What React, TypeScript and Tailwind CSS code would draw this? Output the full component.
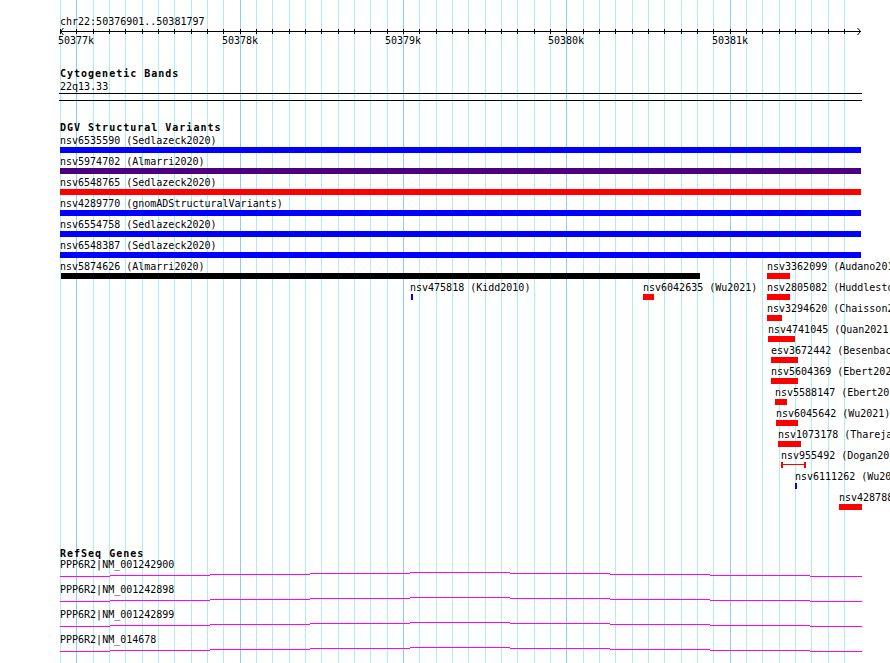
import React from "react";

const gridXs = Array.from({ length: 49 }, (_, k) => Math.round(60 + k * 16.3333));

type Feat = {
  row: number;
  x0: number;
  x1: number;
  color: string;
  label: string;
  lx?: number;
  ibeam?: boolean;
};

const feats: Feat[] = [
  { row: 0, x0: 60, x1: 861, color: "#0000ff", label: "nsv6535590 (Sedlazeck2020)" },
  { row: 1, x0: 60, x1: 861, color: "#4b0082", label: "nsv5974702 (Almarri2020)" },
  { row: 2, x0: 60, x1: 861, color: "#ff0000", label: "nsv6548765 (Sedlazeck2020)" },
  { row: 3, x0: 60, x1: 861, color: "#0000ff", label: "nsv4289770 (gnomADStructuralVariants)" },
  { row: 4, x0: 60, x1: 861, color: "#0000ff", label: "nsv6554758 (Sedlazeck2020)" },
  { row: 5, x0: 60, x1: 861, color: "#0000ff", label: "nsv6548387 (Sedlazeck2020)" },
  { row: 6, x0: 61, x1: 700, color: "#000000", label: "nsv5874626 (Almarri2020)", lx: 60 },
  { row: 6, x0: 767, x1: 790, color: "#ff0000", label: "nsv3362099 (Audano2019)" },
  { row: 7, x0: 411, x1: 413, color: "#0000ff", label: "nsv475818 (Kidd2010)", lx: 410 },
  { row: 7, x0: 643, x1: 654, color: "#ff0000", label: "nsv6042635 (Wu2021)" },
  { row: 7, x0: 767, x1: 790, color: "#ff0000", label: "nsv2805082 (Huddleston2017)" },
  { row: 8, x0: 767, x1: 782, color: "#ff0000", label: "nsv3294620 (Chaisson2019)" },
  { row: 9, x0: 768, x1: 795, color: "#ff0000", label: "nsv4741045 (Quan2021)" },
  { row: 10, x0: 771, x1: 798, color: "#ff0000", label: "esv3672442 (Besenbacher2016)" },
  { row: 11, x0: 771, x1: 798, color: "#ff0000", label: "nsv5604369 (Ebert2021)" },
  { row: 12, x0: 775, x1: 787, color: "#ff0000", label: "nsv5588147 (Ebert2021)" },
  { row: 13, x0: 776, x1: 798, color: "#ff0000", label: "nsv6045642 (Wu2021)" },
  { row: 14, x0: 778, x1: 801, color: "#ff0000", label: "nsv1073178 (Thareja2015)" },
  { row: 15, x0: 781, x1: 806, color: "#ff0000", label: "nsv955492 (Dogan2014)", ibeam: true },
  { row: 16, x0: 795, x1: 797, color: "#0000ff", label: "nsv6111262 (Wu2021)" },
  { row: 17, x0: 839, x1: 862, color: "#ff0000", label: "nsv4287886 (Collins2017)" },
];

const majors: [number, string][] = [
  [1, "50377k"],
  [11, "50378k"],
  [21, "50379k"],
  [31, "50380k"],
  [41, "50381k"],
];

const genes = [
  "PPP6R2|NM_001242900",
  "PPP6R2|NM_001242898",
  "PPP6R2|NM_001242899",
  "PPP6R2|NM_014678",
];

const segs: [number, number, number][] = [
  [60, 110, 0],
  [110, 210, -1],
  [210, 310, -2],
  [310, 410, -3],
  [410, 510, -4],
  [510, 610, -3],
  [610, 710, -2],
  [710, 810, -1],
  [810, 862, 0],
];

export default function App() {
  return (
    <div className="relative w-[890px] h-[663px] overflow-hidden bg-white text-black text-[10px] leading-[11px] font-['DejaVu_Sans_Mono',monospace]">
      {/* grid */}
      <div className="absolute inset-0">
        {gridXs.map((x, k) => (
          <div
            key={k}
            className={`absolute top-0 bottom-0 w-px ${k % 10 === 1 ? "bg-[#87cefa]" : "bg-[#afeeee]"}`}
            style={{ left: x }}
          />
        ))}
      </div>

      <div className="relative flex flex-col">
        {/* ruler */}
        <div className="pt-[16px] pl-[60px] whitespace-nowrap">chr22:50376901..50381797</div>
        <svg width={890} height={8} className="block" shapeRendering="crispEdges">
          <line x1={60} y1={4.5} x2={861} y2={4.5} stroke="#000" strokeWidth={1} />
          {gridXs.map((x, k) => (
            <line key={k} x1={x + 0.5} y1={2} x2={x + 0.5} y2={7} stroke="#000" strokeWidth={1} />
          ))}
          <polyline points="63.5,1 60.5,4.5 63.5,8" fill="none" stroke="#000" strokeWidth={1} shapeRendering="auto" />
          <polyline points="857.5,1 860.5,4.5 857.5,8" fill="none" stroke="#000" strokeWidth={1} shapeRendering="auto" />
        </svg>
        <div className="relative h-[11px]">
          {majors.map(([k, t]) => (
            <span key={k} className="absolute top-0 whitespace-nowrap" style={{ left: gridXs[k] - 18 }}>
              {t}
            </span>
          ))}
        </div>

        {/* cytogenetic bands */}
        <div className="mt-[22px] pl-[60px] font-bold tracking-[1px] whitespace-nowrap">Cytogenetic Bands</div>
        <div className="mt-[2px] pl-[60px] whitespace-nowrap">22q13.33</div>
        <div className="mt-[1px] ml-[59px] w-[803px] h-px bg-black" />
        <div className="mt-[6px] ml-[59px] w-[803px] h-px bg-black" />

        {/* DGV */}
        <div className="mt-[21px] pl-[60px] font-bold tracking-[1px] whitespace-nowrap">DGV Structural Variants</div>
        <div className="relative mt-[2px] h-[378px]">
          {feats.map((f, i) => (
            <React.Fragment key={i}>
              <span className="absolute whitespace-nowrap" style={{ left: f.lx ?? f.x0, top: f.row * 21 }}>
                {f.label}
              </span>
              {f.ibeam ? (
                <>
                  <div className="absolute w-[2px] h-[6px] bg-[#ff0000]" style={{ left: f.x0, top: f.row * 21 + 12 }} />
                  <div className="absolute w-[2px] h-[6px] bg-[#ff0000]" style={{ left: f.x1 - 2, top: f.row * 21 + 12 }} />
                  <div className="absolute h-px bg-[#ff0000]" style={{ left: f.x0, width: f.x1 - f.x0, top: f.row * 21 + 14 }} />
                </>
              ) : (
                <div
                  className="absolute h-[6px]"
                  style={{ left: f.x0, width: f.x1 - f.x0, top: f.row * 21 + 12, background: f.color }}
                />
              )}
            </React.Fragment>
          ))}
        </div>

        {/* RefSeq */}
        <div className="mt-[35px] pl-[60px] font-bold tracking-[1px] whitespace-nowrap">RefSeq Genes</div>
        {genes.map((g) => (
          <div key={g} className="relative h-[25px]">
            <div className="pl-[60px] whitespace-nowrap">{g}</div>
            {segs.map(([a, b, dy], j) => (
              <div
                key={j}
                className="absolute h-px bg-[#ff00ff]"
                style={{ left: a, width: b - a, top: 17 + dy }}
              />
            ))}
          </div>
        ))}
      </div>
    </div>
  );
}
